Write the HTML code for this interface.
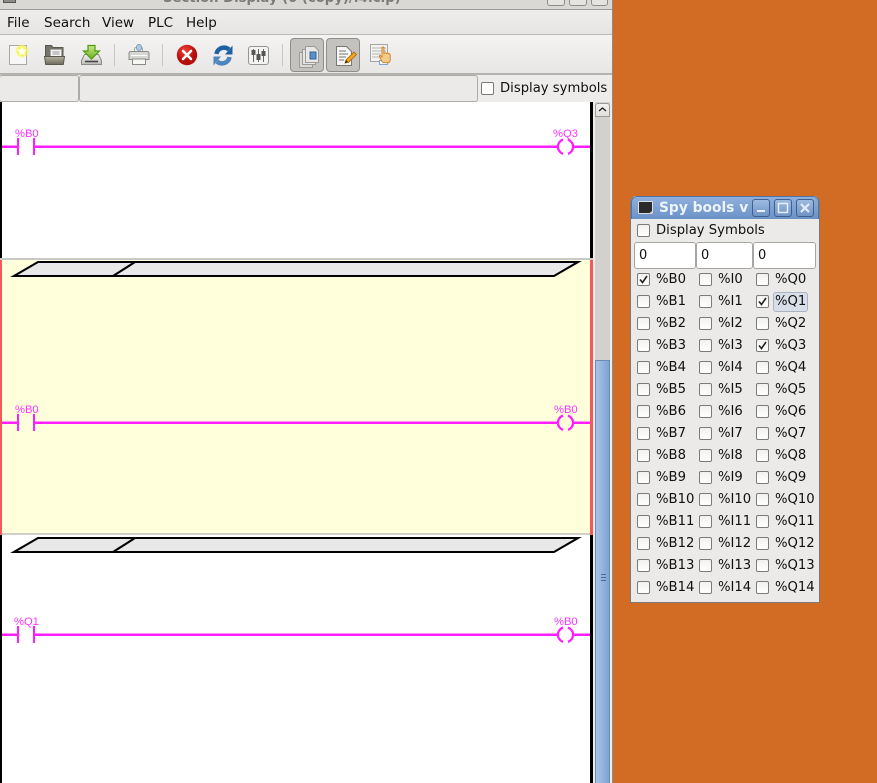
<!DOCTYPE html>
<html><head><meta charset="utf-8">
<style>
html,body{margin:0;padding:0;width:877px;height:783px;overflow:hidden;background:#d26b23;font-family:"DejaVu Sans",sans-serif;}
div,span,svg{position:absolute;box-sizing:border-box}
.t{font-size:13.2px;line-height:16px;color:#101010;white-space:nowrap;margin-top:1px}
.m{top:15px;font-size:13.5px;line-height:16px;color:#111;white-space:nowrap}
.c{width:13px;height:13px;margin-top:-1px;border:1px solid #7d7b78;border-radius:2px;background:linear-gradient(#f2f1f0,#fff)}
.c svg{left:0;top:0}
.l{font-family:"Liberation Sans",sans-serif;font-size:11.2px;line-height:11px;color:#ff33ff;white-space:nowrap}
.e{border:1px solid #a8a6a2;border-radius:3px;background:#fff;font-size:13px;line-height:25px;padding-left:4px;color:#111;height:27px}
.w{width:18px;height:18px;top:199px;border:1px solid #3f5f8c;border-radius:3px;background:linear-gradient(#9dbbe0,#6f94c6)}
</style></head><body>

<!-- main window -->
<div style="left:0;top:0;width:613px;height:783px;background:#edecea;border-right:1px solid #8e8c88"></div>
<div style="left:0;top:0;width:612px;height:10px;background:#dad8d5;border-bottom:1px solid #9e9c98;overflow:hidden">
  <span style="left:163px;top:-10px;font-size:13.2px;font-weight:bold;color:#7d7b78;line-height:18px;white-space:nowrap">Section Display (0 (copy)/.4.clp)</span>
  <span style="left:547px;top:-10px;width:18px;height:16px;border:1px solid #8f8d89;border-radius:3px;background:#e6e4e1"></span>
  <span style="left:569px;top:-10px;width:18px;height:16px;border:1px solid #8f8d89;border-radius:3px;background:#e6e4e1"></span>
  <span style="left:591px;top:-10px;width:17px;height:16px;border:1px solid #8f8d89;border-radius:3px;background:#e6e4e1"></span>
  <span style="left:3px;top:-8px;width:13px;height:11px;background:#8a8a88;border:1px solid #555"></span>
</div>
<!-- menu -->
<div style="left:0;top:10px;width:612px;height:25px;background:linear-gradient(#eeedeb,#e6e5e3);border-bottom:1px solid #bdbbb7"></div>
<span class="m" style="left:7px">File</span>
<span class="m" style="left:44px">Search</span>
<span class="m" style="left:102px">View</span>
<span class="m" style="left:148px">PLC</span>
<span class="m" style="left:186px">Help</span>
<!-- toolbar -->
<div style="left:0;top:35px;width:612px;height:40px;background:linear-gradient(#f4f3f2,#e8e7e5);border-bottom:2px solid #b5b3af"></div>
<div style="left:114px;top:44px;width:1px;height:22px;background:#c9c7c3"></div>
<div style="left:162px;top:44px;width:1px;height:22px;background:#c9c7c3"></div>
<div style="left:282px;top:44px;width:1px;height:22px;background:#c9c7c3"></div>
<div style="left:290px;top:38px;width:34px;height:34px;border:1px solid #8f8d89;border-radius:4px;background:#c4c2be"></div>
<div style="left:326px;top:38px;width:34px;height:34px;border:1px solid #8f8d89;border-radius:4px;background:#c4c2be"></div>

<svg style="left:0;top:36px" width="400" height="38" viewBox="0 36 400 38">
  <defs>
    <radialGradient id="g1"><stop offset="0" stop-color="#ffff30"/><stop offset=".75" stop-color="#f4f050" stop-opacity=".8"/><stop offset="1" stop-color="#ffff80" stop-opacity="0"/></radialGradient>
    <radialGradient id="r1" cx=".4" cy=".3"><stop offset="0" stop-color="#f2443a"/><stop offset="1" stop-color="#b40d0a"/></radialGradient>
    <linearGradient id="gr" x1="0" y1="0" x2="0" y2="1"><stop offset="0" stop-color="#c8e88a"/><stop offset="1" stop-color="#6cae22"/></linearGradient>
    <linearGradient id="fd" x1="0" y1="0" x2="0" y2="1"><stop offset="0" stop-color="#b5b3a0"/><stop offset="1" stop-color="#6c6a58"/></linearGradient>
    <linearGradient id="dk" x1="0" y1="0" x2="0" y2="1"><stop offset="0" stop-color="#f0f0ee"/><stop offset="1" stop-color="#bcbcb8"/></linearGradient>
  </defs>
  <!-- new -->
  <rect x="9.500" y="45.500" width="17" height="19" fill="#f7f7f5" stroke="#a8a8a4"/>
  <circle cx="22" cy="51" r="7" fill="url(#g1)"/>
  <path d="M22 46.500l1.400 3 3.200.4-2.300 2.200.6 3.100-2.900-1.600-2.900 1.600.6-3.100-2.300-2.200 3.200-.4z" fill="#fff"/>
  <!-- open -->
  <path d="M45.500 63.500v-18h6l1.500 2h10v16z" fill="#77756a" stroke="#5a584e"/>
  <rect x="50.500" y="49.500" width="11" height="8" fill="#f4f4f2" stroke="#aaa"/>
  <path d="M52.500 52h7M52.500 54h7" stroke="#999"/>
  <path d="M44.500 56.500h20l-1.200 8h-17.600z" fill="url(#fd)" stroke="#5a584e"/>
  <!-- save -->
  <path d="M84.500 54.500h14l3 6v4h-20v-4z" fill="url(#dk)" stroke="#8a8a86"/>
  <path d="M85 61.500h13" stroke="#444" stroke-width="1.600"/>
  <path d="M88 45.500h7v5.500h4.500l-8 8-8-8H88z" fill="url(#gr)" stroke="#4f9a0e" stroke-width="1.200"/>
  <!-- print -->
  <path d="M134.500 53v-4q0-1.500 1.500-1.500h5q1.500 0 1.500 1.500v4z" fill="#eceff4" stroke="#9aa"/>
  <rect x="136.500" y="44.500" width="5" height="6" rx="2.500" fill="#b5c9e2" stroke="#7f9cc0"/>
  <path d="M131 51.500h16q2 0 2 2v6h-20v-6q0-2 2-2z" fill="#d6d6d2" stroke="#8a8a86"/>
  <rect x="132.500" y="59" width="13" height="5.500" fill="#f6f6f4" stroke="#8a8a86"/>
  <path d="M131 55.500h16" stroke="#fff"/>
  <!-- stop -->
  <circle cx="187" cy="55" r="10.200" fill="url(#r1)"/>
  <path d="M183 51l8 8M191 51l-8 8" stroke="#fff" stroke-width="2.600" stroke-linecap="round"/>
  <!-- refresh -->
  <path d="M216.500 54a7.500 7 0 0 1 12.500-4.500" fill="none" stroke="#1f5fa3" stroke-width="4.500"/>
  <path d="M225 54.500h7.500V45.500z" fill="#1f5fa3"/>
  <path d="M229.500 57a7.500 7 0 0 1-12.500 4.500" fill="none" stroke="#4f85bf" stroke-width="4.500"/>
  <path d="M221 56.500h-7.500V65.500z" fill="#4f85bf"/>
  <!-- config -->
  <rect x="248.500" y="46.500" width="20" height="18" rx="2.500" fill="#f3f3f1" stroke="#96948f"/>
  <path d="M253.500 49v13M258.500 49v13M263.500 49v13" stroke="#666" stroke-width="1"/>
  <rect x="251.500" y="50" width="4" height="5" fill="#555"/>
  <rect x="256.500" y="54" width="4" height="6" fill="#555"/>
  <rect x="261.500" y="51" width="4" height="5" fill="#555"/>
  <!-- pages -->
  <rect x="299.500" y="52.500" width="13" height="15" fill="#dadad8" stroke="#9a9a98"/>
  <rect x="302.500" y="49.500" width="13" height="15" fill="#e6e6e4" stroke="#9a9a98"/>
  <path d="M305.500 46.500h9l4 4v12h-13z" fill="#e8e8e6" stroke="#9a9a98"/>
  <rect x="310" y="52" width="6" height="7" fill="#5d8fc6" stroke="#34659c"/>
  <!-- edit -->
  <path d="M336.500 46.500h10l5 5v14h-15z" fill="#f6f6f4" stroke="#777"/>
  <path d="M339 51h7M339 54h9M339 57h7M339 60h5" stroke="#777"/>
  <path d="M345 63l1-3 8-8 2.500 2.500-8 8z" fill="#f0a418" stroke="#a9650c" stroke-width=".8"/>
  <path d="M345 63l1-3 2 2z" fill="#222"/>
  <!-- hand -->
  <rect x="370.500" y="44.500" width="17" height="17" fill="#f3f3f1" stroke="#a5a5a3"/>
  <path d="M372 48h14M372 51h14M372 54h9M372 57h8" stroke="#b5b5b3"/>
  <rect x="379.500" y="60.500" width="8" height="4" fill="#f4f8fc" stroke="#7fa8d8"/>
  <path d="M382 47.500q1.200-1 2 0v6l1-.5q1.200-.5 1.500.5l1-.3q1.200-.3 1.500.7.900-.3 1.200.8v5q0 3-2.500 3h-3.700q-1.500 0-2.500-2l-2-4q-.4-1.200.8-1.200l1.700 1.500z" fill="#f4c98c" stroke="#c9801e" stroke-width=".9"/>
</svg>

<!-- status row -->
<div style="left:-1px;top:75px;width:80px;height:27px;border:1px solid #aeaca8;border-radius:3px;background:#ebeae8"></div>
<div style="left:79px;top:75px;width:399px;height:27px;border:1px solid #aeaca8;border-radius:3px;background:#ebeae8"></div>
<div class="c" style="left:481px;top:82px;margin-top:0;background:#fff"></div>
<span class="t" style="left:500px;top:80px">Display symbols</span>

<!-- canvas -->
<div style="left:0;top:102px;width:593px;height:681px;background:#fff;border-left:2px solid #000;border-right:3px solid #000"></div>
<div style="left:0;top:258px;width:593px;height:2px;background:#c8c8c6"></div>
<div style="left:0;top:260px;width:593px;height:275px;background:#ffffdc;border-left:2px solid #f25a5a;border-right:3px solid #f25a5a"></div>
<div style="left:2px;top:533px;width:588px;height:2px;background:#d0d0c8"></div>

<svg style="left:0;top:102px" width="595" height="681" viewBox="0 102 595 681">
  <g fill="#e8e8e8" stroke="#000" stroke-width="2.100">
    <path d="M38 262H578L554 276H14z"/>
    <path d="M135 262L113 276"/>
    <path d="M38 538H578L554 552H14z"/>
    <path d="M135 538L113 552"/>
  </g>
  <g fill="none" stroke="#ff1eff" stroke-width="2.500">
    <path d="M2 146.750H18M34 146.750H558M573 146.750H590"/>
    <path d="M18 138v17M34 138v17" stroke-width="2"/>
    <path d="M563 139.650A7.500 7.500 0 0 0 563 153.850M568 139.650A7.500 7.500 0 0 1 568 153.850" stroke-width="2.300"/>
    <path d="M2 422.750H18M34 422.750H558M573 422.750H590"/>
    <path d="M18 414v17M34 414v17" stroke-width="2"/>
    <path d="M563 415.650A7.500 7.500 0 0 0 563 429.850M568 415.650A7.500 7.500 0 0 1 568 429.850" stroke-width="2.300"/>
    <path d="M2 634.750H18M34 634.750H558M573 634.750H590"/>
    <path d="M18 626v17M34 626v17" stroke-width="2"/>
    <path d="M563 627.650A7.500 7.500 0 0 0 563 641.850M568 627.650A7.500 7.500 0 0 1 568 641.850" stroke-width="2.300"/>
  </g>
</svg>
<span class="l" style="left:15px;top:129px">%B0</span>
<span class="l" style="left:553px;top:129px">%Q3</span>
<span class="l" style="left:15px;top:405px">%B0</span>
<span class="l" style="left:554px;top:405px">%B0</span>
<span class="l" style="left:14px;top:617px">%Q1</span>
<span class="l" style="left:554px;top:617px">%B0</span>

<!-- scrollbar -->
<div style="left:593px;top:102px;width:2px;height:681px;background:#edecea"></div>
<div style="left:595px;top:102px;width:15px;height:681px;background:#d3d1cd"></div>
<div style="left:595px;top:103px;width:15px;height:14px;background:linear-gradient(#f3f2f1,#e2e0dd);border:1px solid #9c9a96;border-radius:3px 3px 0 0"></div>
<svg style="left:598px;top:106px" width="9" height="7"><path d="M1 5L4.500 2L8 5" fill="none" stroke="#222" stroke-width="1.300"/></svg>
<div style="left:595px;top:360px;width:15px;height:423px;background:linear-gradient(90deg,#a8c4e6,#7ea4d4);border:1px solid #6a8cb8;border-bottom:0"></div>
<div style="left:601px;top:574px;width:5px;height:1px;background:#4a6a96"></div>
<div style="left:601px;top:577px;width:5px;height:1px;background:#4a6a96"></div>
<div style="left:601px;top:580px;width:5px;height:1px;background:#4a6a96"></div>

<!-- spy window -->
<div style="left:630px;top:196px;width:190px;height:407px;background:#ebeae9;border:1px solid #7c7a76;border-top:0;border-radius:6px 6px 0 0"></div>
<div style="left:631px;top:196px;width:188px;height:23px;background:linear-gradient(#8fb0dc,#6a92c8);border-radius:6px 6px 0 0;border:1px solid #54749f;border-bottom:0"></div>
<svg style="left:638px;top:201px" width="16" height="14"><rect x=".5" y=".5" width="14" height="12" rx="1" fill="#2a2a2a" stroke="#ddd"/><path d="M11 12.500L14.500 9.500V12.500z" fill="#ccc"/></svg>
<span style="left:659px;top:200px;font-size:13.8px;font-weight:bold;line-height:16px;color:#eef3fa;white-space:nowrap">Spy bools v</span>
<div class="w" style="left:752px"><svg width="16" height="16"><path d="M4 11h8" stroke="#e8eef8" stroke-width="2"/></svg></div>
<div class="w" style="left:774px"><svg width="16" height="16"><rect x="3.500" y="3.500" width="9" height="9" fill="none" stroke="#e8eef8" stroke-width="1.500"/></svg></div>
<div class="w" style="left:796px"><svg width="16" height="16"><path d="M4 4l8 8M12 4l-8 8" stroke="#e8eef8" stroke-width="2"/></svg></div>

<div class="c" style="left:637px;top:224px;margin-top:0"></div>
<span class="t" style="left:656px;top:222px">Display Symbols</span>
<div class="e" style="left:634px;top:242px;width:62px">0</div>
<div class="e" style="left:696px;top:242px;width:57px">0</div>
<div class="e" style="left:753px;top:242px;width:63px">0</div>
<div style="left:773px;top:292px;width:35px;height:20px;background:#d8dfe8;border:1px solid #a8b4c6;border-radius:3px"></div>

<div class="c" style="left:637px;top:274px"><svg width="11" height="11"><path d="M2 5.500l2.500 3L9 2" fill="none" stroke="#222" stroke-width="1.600"/></svg></div><span class="t" style="left:656px;top:271px">%B0</span>
<div class="c" style="left:699px;top:274px"></div><span class="t" style="left:718px;top:271px">%I0</span>
<div class="c" style="left:756px;top:274px"></div><span class="t" style="left:775px;top:271px">%Q0</span>

<div class="c" style="left:637px;top:296px"></div><span class="t" style="left:656px;top:293px">%B1</span>
<div class="c" style="left:699px;top:296px"></div><span class="t" style="left:718px;top:293px">%I1</span>
<div class="c" style="left:756px;top:296px"><svg width="11" height="11"><path d="M2 5.500l2.500 3L9 2" fill="none" stroke="#222" stroke-width="1.600"/></svg></div><span class="t" style="left:775px;top:293px">%Q1</span>

<div class="c" style="left:637px;top:318px"></div><span class="t" style="left:656px;top:315px">%B2</span>
<div class="c" style="left:699px;top:318px"></div><span class="t" style="left:718px;top:315px">%I2</span>
<div class="c" style="left:756px;top:318px"></div><span class="t" style="left:775px;top:315px">%Q2</span>

<div class="c" style="left:637px;top:340px"></div><span class="t" style="left:656px;top:337px">%B3</span>
<div class="c" style="left:699px;top:340px"></div><span class="t" style="left:718px;top:337px">%I3</span>
<div class="c" style="left:756px;top:340px"><svg width="11" height="11"><path d="M2 5.500l2.500 3L9 2" fill="none" stroke="#222" stroke-width="1.600"/></svg></div><span class="t" style="left:775px;top:337px">%Q3</span>

<div class="c" style="left:637px;top:362px"></div><span class="t" style="left:656px;top:359px">%B4</span>
<div class="c" style="left:699px;top:362px"></div><span class="t" style="left:718px;top:359px">%I4</span>
<div class="c" style="left:756px;top:362px"></div><span class="t" style="left:775px;top:359px">%Q4</span>

<div class="c" style="left:637px;top:384px"></div><span class="t" style="left:656px;top:381px">%B5</span>
<div class="c" style="left:699px;top:384px"></div><span class="t" style="left:718px;top:381px">%I5</span>
<div class="c" style="left:756px;top:384px"></div><span class="t" style="left:775px;top:381px">%Q5</span>

<div class="c" style="left:637px;top:406px"></div><span class="t" style="left:656px;top:403px">%B6</span>
<div class="c" style="left:699px;top:406px"></div><span class="t" style="left:718px;top:403px">%I6</span>
<div class="c" style="left:756px;top:406px"></div><span class="t" style="left:775px;top:403px">%Q6</span>

<div class="c" style="left:637px;top:428px"></div><span class="t" style="left:656px;top:425px">%B7</span>
<div class="c" style="left:699px;top:428px"></div><span class="t" style="left:718px;top:425px">%I7</span>
<div class="c" style="left:756px;top:428px"></div><span class="t" style="left:775px;top:425px">%Q7</span>

<div class="c" style="left:637px;top:450px"></div><span class="t" style="left:656px;top:447px">%B8</span>
<div class="c" style="left:699px;top:450px"></div><span class="t" style="left:718px;top:447px">%I8</span>
<div class="c" style="left:756px;top:450px"></div><span class="t" style="left:775px;top:447px">%Q8</span>

<div class="c" style="left:637px;top:472px"></div><span class="t" style="left:656px;top:469px">%B9</span>
<div class="c" style="left:699px;top:472px"></div><span class="t" style="left:718px;top:469px">%I9</span>
<div class="c" style="left:756px;top:472px"></div><span class="t" style="left:775px;top:469px">%Q9</span>

<div class="c" style="left:637px;top:494px"></div><span class="t" style="left:656px;top:491px">%B10</span>
<div class="c" style="left:699px;top:494px"></div><span class="t" style="left:718px;top:491px">%I10</span>
<div class="c" style="left:756px;top:494px"></div><span class="t" style="left:775px;top:491px">%Q10</span>

<div class="c" style="left:637px;top:516px"></div><span class="t" style="left:656px;top:513px">%B11</span>
<div class="c" style="left:699px;top:516px"></div><span class="t" style="left:718px;top:513px">%I11</span>
<div class="c" style="left:756px;top:516px"></div><span class="t" style="left:775px;top:513px">%Q11</span>

<div class="c" style="left:637px;top:538px"></div><span class="t" style="left:656px;top:535px">%B12</span>
<div class="c" style="left:699px;top:538px"></div><span class="t" style="left:718px;top:535px">%I12</span>
<div class="c" style="left:756px;top:538px"></div><span class="t" style="left:775px;top:535px">%Q12</span>

<div class="c" style="left:637px;top:560px"></div><span class="t" style="left:656px;top:557px">%B13</span>
<div class="c" style="left:699px;top:560px"></div><span class="t" style="left:718px;top:557px">%I13</span>
<div class="c" style="left:756px;top:560px"></div><span class="t" style="left:775px;top:557px">%Q13</span>

<div class="c" style="left:637px;top:582px"></div><span class="t" style="left:656px;top:579px">%B14</span>
<div class="c" style="left:699px;top:582px"></div><span class="t" style="left:718px;top:579px">%I14</span>
<div class="c" style="left:756px;top:582px"></div><span class="t" style="left:775px;top:579px">%Q14</span>

</body></html>
